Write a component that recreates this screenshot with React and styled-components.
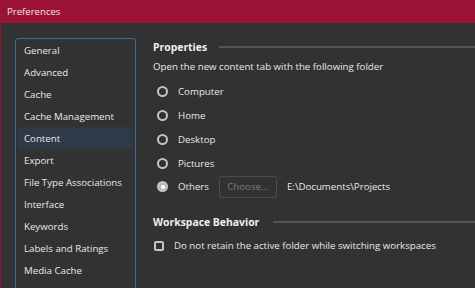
import React from "react";
import styled, { createGlobalStyle } from "styled-components";

const GlobalStyle = createGlobalStyle`
  html, body {
    margin: 0;
    padding: 0;
    background: #323232;
    overflow: hidden;
  }
  body {
    font-family: "Open Sans", "Noto Sans", sans-serif;
  }
`;

const Window = styled.div`
  width: 475px;
  height: 288px;
  background: #323232;
  border-left: 1px solid #9b1236;
  box-sizing: border-box;
  display: flex;
  flex-direction: column;
  overflow: hidden;
`;

const TitleBar = styled.div`
  height: 23px;
  flex: none;
  background: #9b1236;
  color: #f2e6ea;
  font-size: 9.6px;
  display: flex;
  align-items: center;
  padding-left: 7px;
  margin-left: -1px;
`;

const Body = styled.div`
  flex: 1;
  display: flex;
  gap: 17px;
  padding: 15px 0 0 14px;
  min-height: 0;
`;

const Sidebar = styled.ul`
  list-style: none;
  margin: 0;
  padding: 0 2px;
  width: 121px;
  box-sizing: border-box;
  border: 1px solid #3e6c9e;
  border-bottom: none;
  border-radius: 4px 4px 0 0;
  flex: none;
  height: 260px;
`;

const NavItem = styled.li`
  height: 22px;
  display: flex;
  align-items: center;
  padding-left: 6px;
  font-size: 9.7px;
  color: #e8e8e8;
  white-space: nowrap;
  background: ${(p) => (p.active ? "#2e3a47" : "transparent")};
`;

const Content = styled.div`
  flex: 1;
  display: flex;
  flex-direction: column;
  min-width: 0;
`;

const SectionHeader = styled.div`
  display: flex;
  align-items: center;
  gap: ${(p) => p.gap || 12}px;
  height: 18px;
  margin-top: ${(p) => p.top || 0}px;
`;

const SectionTitle = styled.span`
  font-size: 10.4px;
  font-weight: 700;
  color: #f0f0f0;
  white-space: nowrap;
`;

const Rule = styled.div`
  flex: 1;
  height: 2px;
  background: #555;
`;

const Hint = styled.div`
  font-size: 9.7px;
  color: #e8e8e8;
  margin-top: 1px;
  height: 18px;
  display: flex;
  align-items: center;
`;

const RadioList = styled.div`
  display: flex;
  flex-direction: column;
  margin-top: 5px;
`;

const RadioRow = styled.label`
  height: 23.75px;
  display: flex;
  align-items: center;
  font-size: 9.7px;
  color: #e8e8e8;
  padding-left: 4px;
`;

const Radio = styled.span`
  width: 11px;
  height: 11px;
  box-sizing: border-box;
  border-radius: 50%;
  border: 2px solid #c4c4c4;
  background: ${(p) => (p.checked ? "#b8b8b8" : "transparent")};
  margin-right: 10px;
  display: flex;
  align-items: center;
  justify-content: center;
  &::after {
    content: "";
    display: ${(p) => (p.checked ? "block" : "none")};
    width: 4px;
    height: 4px;
    border-radius: 50%;
    background: #fff;
  }
`;

const ChooseButton = styled.span`
  width: 58px;
  height: 22px;
  box-sizing: border-box;
  border: 1px solid #4c4c4c;
  border-radius: 3px;
  color: #7a7a7a;
  font-size: 9.7px;
  display: flex;
  align-items: center;
  justify-content: center;
  margin-left: 10px;
  margin-right: 10px;
`;

const CheckRow = styled.label`
  display: flex;
  align-items: center;
  height: 20px;
  margin-top: 5px;
  font-size: 9.7px;
  color: #e8e8e8;
`;

const Checkbox = styled.span`
  width: 10px;
  height: 10px;
  box-sizing: border-box;
  border: 2px solid #c4c4c4;
  border-radius: 2px;
  margin-left: 1px;
  margin-right: 10px;
`;

const navItems = [
  "General",
  "Advanced",
  "Cache",
  "Cache Management",
  "Content",
  "Export",
  "File Type Associations",
  "Interface",
  "Keywords",
  "Labels and Ratings",
  "Media Cache",
];

const folders = ["Computer", "Home", "Desktop", "Pictures"];

export default function App() {
  return (
    <>
      <GlobalStyle />
      <Window>
        <TitleBar>Preferences</TitleBar>
        <Body>
          <Sidebar>
            {navItems.map((item) => (
              <NavItem key={item} active={item === "Content"}>
                {item}
              </NavItem>
            ))}
          </Sidebar>
          <Content>
            <SectionHeader>
              <SectionTitle>Properties</SectionTitle>
              <Rule />
            </SectionHeader>
            <Hint>Open the new content tab with the following folder</Hint>
            <RadioList>
              {folders.map((f) => (
                <RadioRow key={f}>
                  <Radio />
                  {f}
                </RadioRow>
              ))}
              <RadioRow>
                <Radio checked />
                Others
                <ChooseButton>Choose...</ChooseButton>
                E:\Documents\Projects
              </RadioRow>
            </RadioList>
            <SectionHeader top={14} gap={14}>
              <SectionTitle>Workspace Behavior</SectionTitle>
              <Rule />
            </SectionHeader>
            <CheckRow>
              <Checkbox />
              Do not retain the active folder while switching workspaces
            </CheckRow>
          </Content>
        </Body>
      </Window>
    </>
  );
}
